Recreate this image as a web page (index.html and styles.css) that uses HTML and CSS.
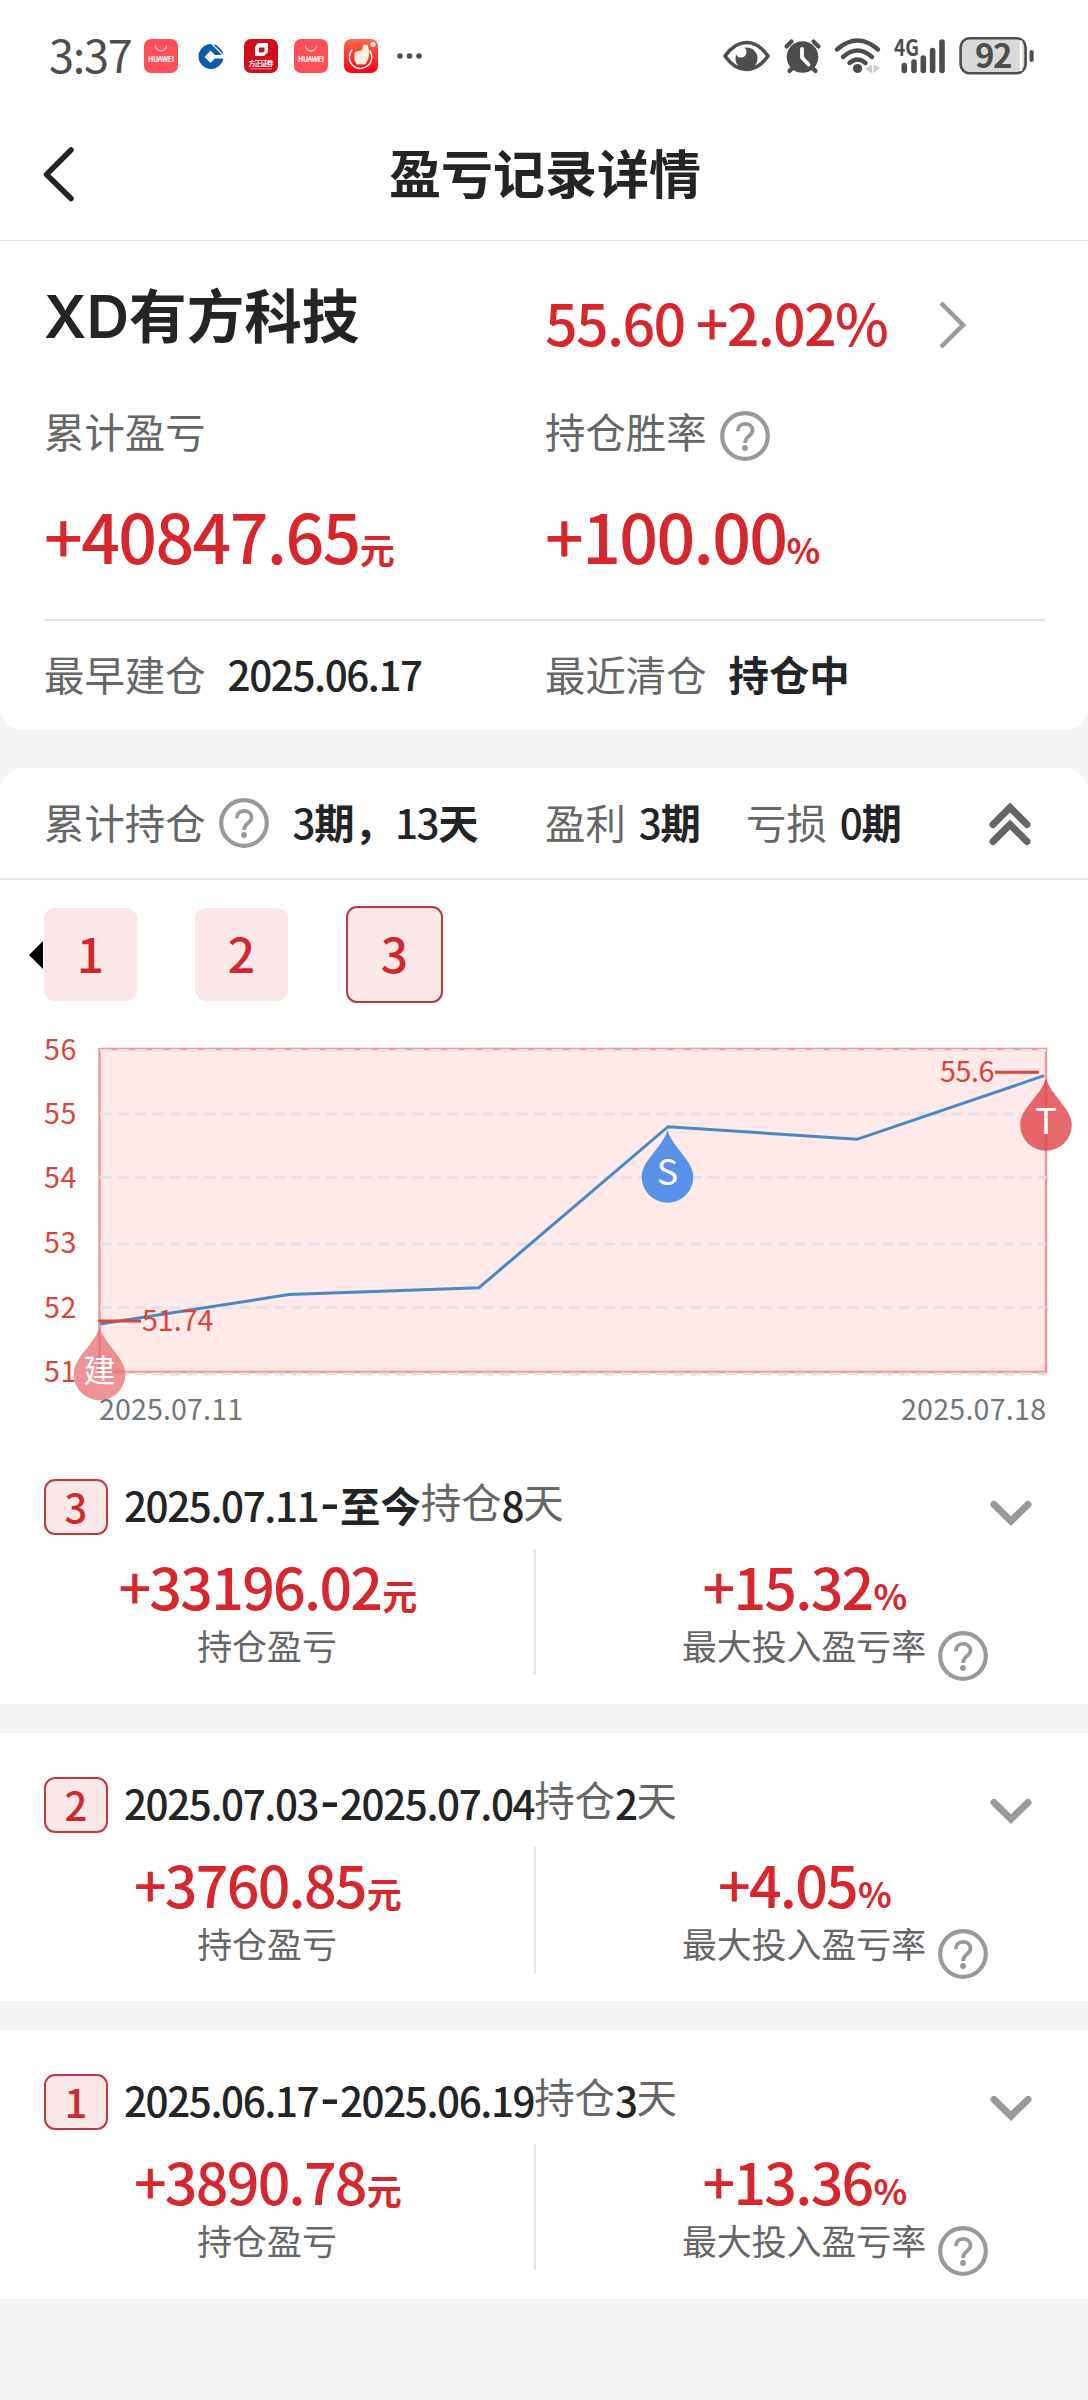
FILE: index.html
```html
<!DOCTYPE html>
<html lang="zh-CN">

<head>
	<meta charset="UTF-8">
	<meta name="viewport" content="width=device-width, initial-scale=1.0">
	<title>盈亏记录详情</title>
	<link rel="stylesheet" href="styles.css">
</head>

<body>
	<!-- 公用图标 -->
	<svg class="defs">
		<symbol id="help" viewBox="0 0 50 50">
			<circle cx="25" cy="25" r="22.8" fill="none" stroke="#999" stroke-width="4.2" />
			<path d="M17.8 20.2c0-4.6 3-7.4 7.3-7.4s7.4 2.6 7.4 6.6c0 5.6-7.4 5.6-7.4 12.6" fill="none" stroke="#999" stroke-width="3.8" />
			<circle cx="25" cy="37" r="2.9" fill="#999" />
		</symbol>
		<symbol id="down" viewBox="0 0 42 26">
			<path d="M4 4.500l17 16.500 17-16.500" fill="none" stroke="#999" stroke-width="7" stroke-linecap="round" />
		</symbol>
	</svg>

	<!-- 状态栏 -->
	<div class="status">
		<span class="time">3:37</span>
		<div class="apps">
			<svg width="34" height="34" viewBox="0 0 34 34">
				<rect width="34" height="34" rx="7" fill="#ff4f58" />
				<path d="M11.500 6.500a5.500 5.500 0 0 0 11 0" fill="none" stroke="#fff" stroke-width="1" />
				<text x="4" y="22.500" fill="#fff" font-size="7" font-weight="600" textLength="26">HUAWEI</text>
			</svg>
			<svg width="34" height="34" viewBox="0 0 34 34">
				<circle cx="17" cy="17.500" r="12.500" fill="#0a5cab" />
				<path d="M16.500 11.500l4.500 4.500h10v3.500H21l-4.500 4.500-6-6z" fill="#fff" />
				<path d="M16 3l13 13M20 2.500l12 12" stroke="#fff" stroke-width="1.200" />
			</svg>
			<svg width="34" height="34" viewBox="0 0 34 34">
				<rect width="34" height="34" rx="7" fill="#d20d1c" />
				<path d="M14 4h10v9l-4 4h-9V8zM15 8.500v5h4l1.500-1.500V8.500z" fill="#fff" fill-rule="evenodd" />
				<text x="4.500" y="27" fill="#fff" font-size="7" font-weight="700" textLength="25">方正证券</text>
				<path d="M6 29.800h22" stroke="#ee8a90" stroke-width="1" />
			</svg>
			<svg width="34" height="34" viewBox="0 0 34 34">
				<rect width="34" height="34" rx="7" fill="#ff4f58" />
				<path d="M11.500 6.500a5.500 5.500 0 0 0 11 0" fill="none" stroke="#fff" stroke-width="1" />
				<text x="4" y="22.500" fill="#fff" font-size="7" font-weight="600" textLength="26">HUAWEI</text>
			</svg>
			<svg width="34" height="34" viewBox="0 0 34 34">
				<linearGradient id="fire" x2="0" y2="1">
					<stop stop-color="#ff6a4c" />
					<stop offset="1" stop-color="#fb0012" />
				</linearGradient>
				<rect width="34" height="34" rx="7" fill="url(#fire)" />
				<path d="M8.500 10.500a11.200 11.200 0 1 0 17 1" fill="none" stroke="#fff" stroke-width="1.400" />
				<path d="M11 13l7-2 1.500-5.500 4 .5 1.500 5c1 4-1 12-4 14.500h-8c-3-3-3-8-2-12.500z" fill="#fff0dc" />
				<circle cx="29" cy="5.500" r="2.500" fill="#fff" />
			</svg>
			<svg class="more" width="26" height="34" viewBox="0 0 26 34">
				<g fill="#4d4d4d">
					<circle cx="4" cy="17" r="2.800" />
					<circle cx="13.500" cy="17" r="2.800" />
					<circle cx="23" cy="17" r="2.800" />
				</g>
			</svg>
		</div>
		<svg class="signals" width="314" height="40" viewBox="722 36 314 40">
			<g fill="none" stroke="#4d4d4d" stroke-width="3.600" stroke-linecap="round" stroke-linejoin="round">
				<!-- 护眼 -->
				<path d="M725 56q9.500-13.500 21.500-13.500T768 56q-9.500 13.500-21.500 13.500T725 56z" />
				<!-- 闹钟 -->
				<path d="M786.500 46.500l5-5M818.500 46.500l-5-5M789.500 71l4-4M815.500 71l-4-4" stroke-width="4.200" />
				<!-- 无线网络 -->
				<path d="M837 49.500q20.500-18 41 0M843 57q14.500-13 29 0M849.500 63q8-7 16 0" stroke-width="4.400" />
				<path d="M904.300 65.500v5M914 62v8.500M923.300 58v12.500M932.600 50.500v20M942 42v28.500" stroke-width="5.600" />
			</g>
			<circle cx="746.500" cy="58.500" r="11" fill="#4d4d4d" />
			<circle cx="741" cy="52" r="5.500" fill="#fff" />
			<circle cx="802.500" cy="57" r="15.800" fill="#4d4d4d" />
			<path d="M802 49v8.500l6.500 7" fill="none" stroke="#fff" stroke-width="3.800" stroke-linecap="round" />
			<circle cx="857.500" cy="68.500" r="4.600" fill="#4d4d4d" />
			<path d="M872 64.500v9l-6.500-4.500zM873.500 64.500v9l6.500-6z" fill="#ccc" />
			<text class="net" x="894" y="56" textLength="25" lengthAdjust="spacingAndGlyphs">4G</text>
			<rect x="960.600" y="38.200" width="65" height="35" rx="9" fill="#d9d9d9" stroke="#4d4d4d" stroke-width="2.600" />
			<path d="M1021 40.500v30.500" stroke="#fff" stroke-width="2.500" />
			<rect x="1029.500" y="50" width="4.200" height="12" rx="2" fill="#4d4d4d" />
			<text class="bat" x="975" y="67.500">92</text>
		</svg>
	</div>

	<!-- 标题栏 -->
	<div class="nav">
		<svg class="back" width="34" height="58" viewBox="0 0 34 58">
			<path d="M28 5L3.500 29.500 28 53.500" fill="none" stroke="#222426" stroke-width="5.500" stroke-linecap="round" stroke-linejoin="round" />
		</svg>
		<h1>盈亏记录详情</h1>
	</div>

	<!-- 汇总 -->
	<div class="summary">
		<div class="row name">
			<h2><span>XD</span>有方科技</h2>
			<div class="price">55.60 +2.02%
				<svg width="30" height="50" viewBox="0 0 30 50">
					<path d="M3 3l22 22L3 47" fill="none" stroke="#999" stroke-width="4.500" />
				</svg>
			</div>
		</div>
		<div class="row label">
			<div>累计盈亏</div>
			<div>持仓胜率<svg class="help"><use href="#help" /></svg></div>
		</div>
		<div class="row total">
			<div>+40847.65<small>元</small></div>
			<div>+100.00<small>%</small></div>
		</div>
		<div class="row dates">
			<div>最早建仓<b class="num">2025.06.17</b></div>
			<div>最近清仓<b>持仓中</b></div>
		</div>
	</div>

	<!-- 持仓周期 -->
	<div class="period">
		<div class="head">
			<div class="hold">累计持仓<svg class="help"><use href="#help" /></svg><b><s>3</s>期，<s>13</s>天</b></div>
			<div class="win">盈利<b><s>3</s>期</b></div>
			<div class="lose">亏损<b><s>0</s>期</b></div>
			<svg class="fold" width="44" height="44" viewBox="0 0 44 44">
				<path d="M5 22.500L22 5.500l17 17M5 39.500l17-17 17 17" fill="none" stroke="#666" stroke-width="7" stroke-linecap="round" />
			</svg>
		</div>
		<div class="tabs">
			<span class="arrow"></span>
			<a href="#">1</a>
			<a href="#">2</a>
			<a href="#" class="active">3</a>
		</div>

		<svg class="chart" width="1088" height="432" viewBox="0 0 1088 432">
			<rect x="99.500" y="46" width="946.500" height="323" fill="#ffe9e9" stroke="#f09a98" stroke-width="2.600" />
			<g class="grid">
				<path d="M100 47.500h946M100 111h946M100 174.500h946M100 241h946M100 304.500h946M100 371h946" />
			</g>
			<polyline points="100,321 289,291.500 479,284.700 668,123.700 857,136.300 1044,72.700" fill="none" stroke="#4688c8" stroke-width="3" />
			<g class="axis">
				<text x="44" y="56.500">56</text>
				<text x="44" y="121">55</text>
				<text x="44" y="185">54</text>
				<text x="44" y="250">53</text>
				<text x="44" y="315">52</text>
				<text x="44" y="379">51</text>
				<text x="142" y="328" textLength="72">51.74</text>
				<text x="940" y="79" textLength="55">55.6</text>
			</g>
			<path d="M98.500 318H141M995 69.300h44" stroke="#dc4437" stroke-width="3" />
			<g class="pin">
				<path d="M99.500 324c5 18 25.800 30 25.800 47.500a25.800 25.800 0 0 1-51.600 0c0-17.500 20.800-29.500 25.800-47.500z" fill="#e66a6e" fill-opacity=".72" />
				<text x="99.500" y="379" font-size="32">建</text>
				<path d="M667.500 127c5 18 25.800 30 25.800 47a25.800 25.800 0 0 1-51.600 0c0-17 20.800-29 25.800-47z" fill="#5a91e8" />
				<text x="667.500" y="182" font-size="36">S</text>
				<path d="M1046 75c5 18 25.800 30 25.800 47a25.800 25.800 0 0 1-51.600 0c0-17 20.800-29 25.800-47z" fill="#e04448" fill-opacity=".8" />
				<text x="1046" y="131" font-size="36">T</text>
			</g>
			<g class="date">
				<text x="99" y="417" textLength="144">2025.07.11</text>
				<text x="901" y="417" textLength="145">2025.07.18</text>
			</g>
		</svg>
	</div>

	<!-- 每期记录 -->
	<ul class="records">
		<li>
			<div class="top">
				<i>3</i>
				<b class="num">2025.07.11<u>-</u><em>至今</em></b><span>持仓</span><b class="num">8</b><span>天</span>
				<svg class="down"><use href="#down" /></svg>
			</div>
			<div class="data">
				<div class="col">
					<p>+33196.02<small>元</small></p>
					<span>持仓盈亏</span>
				</div>
				<div class="col rate">
					<p>+15.32<small>%</small></p>
					<span>最大投入盈亏率<svg class="help"><use href="#help" /></svg></span>
				</div>
			</div>
		</li>
		<li>
			<div class="top">
				<i>2</i>
				<b class="num">2025.07.03<u>-</u>2025.07.04</b><span>持仓</span><b class="num">2</b><span>天</span>
				<svg class="down"><use href="#down" /></svg>
			</div>
			<div class="data">
				<div class="col">
					<p>+3760.85<small>元</small></p>
					<span>持仓盈亏</span>
				</div>
				<div class="col rate">
					<p>+4.05<small>%</small></p>
					<span>最大投入盈亏率<svg class="help"><use href="#help" /></svg></span>
				</div>
			</div>
		</li>
		<li>
			<div class="top">
				<i>1</i>
				<b class="num">2025.06.17<u>-</u>2025.06.19</b><span>持仓</span><b class="num">3</b><span>天</span>
				<svg class="down"><use href="#down" /></svg>
			</div>
			<div class="data">
				<div class="col">
					<p>+3890.78<small>元</small></p>
					<span>持仓盈亏</span>
				</div>
				<div class="col rate">
					<p>+13.36<small>%</small></p>
					<span>最大投入盈亏率<svg class="help"><use href="#help" /></svg></span>
				</div>
			</div>
		</li>
	</ul>
</body>

</html>
```
FILE: styles.css
```css
* {
	margin: 0;
	padding: 0;
	box-sizing: border-box;
}

body {
	width: 1088px;
	min-height: 2400px;
	background: #f3f4f6;
	font-family: "Noto Sans CJK SC", sans-serif;
	color: #222426;
}

ul {
	list-style: none;
}

i,
em {
	font-style: normal;
}

s,
u {
	text-decoration: none;
}

svg {
	display: block;
	flex: none;
	overflow: visible;
}

.defs {
	position: absolute;
	width: 0;
	height: 0;
}

.help {
	width: 50px;
	height: 50px;
	margin-left: 13px;
}

.num {
	letter-spacing: -0.035em;
}

/* 状态栏 */
.status {
	display: flex;
	align-items: center;
	height: 112px;
	padding: 0 52px 0 49px;
	background: #fff;
}

.time {
	width: 95px;
	padding-bottom: 4px;
	font-size: 45px;
	line-height: 60px;
	letter-spacing: -1.2px;
	color: #4d4d4d;
}

.apps {
	display: flex;
	gap: 16px;
}

.apps .more {
	margin-left: 2px;
}

.signals {
	margin-left: auto;
}

.net {
	font-size: 23px;
	font-weight: 700;
	fill: #4d4d4d;
}

.bat {
	font-size: 33px;
	font-weight: 700;
	letter-spacing: -1.5px;
	fill: #4d4d4d;
}

/* 标题栏 */
.nav {
	display: flex;
	align-items: center;
	height: 129px;
	padding: 0 43px 5px;
	background: #fff;
	border-bottom: 1px solid #e5e5e5;
}

.nav h1 {
	flex: 1;
	margin-right: 32px;
	padding-bottom: 4px;
	font-size: 52px;
	font-weight: 600;
	line-height: 80px;
	text-align: center;
}

/* 汇总 */
.summary {
	height: 489px;
	padding: 35px 43px 0 44px;
	background: #fff;
	border-radius: 0 0 23px 23px;
}

.row {
	display: grid;
	grid-template-columns: 501px 1fr;
	align-items: center;
}

.row > div {
	display: flex;
	align-items: center;
}

.name {
	height: 90px;
}

.name h2 {
	padding-bottom: 14px;
	font-size: 57.6px;
	font-weight: 700;
	line-height: 74px;
}

.name h2 span {
	font-family: Inter, sans-serif;
	font-size: 59px;
	font-weight: 600;
}

.name .price {
	font-size: 57.3px;
	font-weight: 500;
	line-height: 80px;
	letter-spacing: -0.029em;
	color: #d8272c;
}

.price svg {
	margin: 6px 0 0 51px;
}

.label {
	height: 130px;
	padding-bottom: 2px;
	font-size: 40.4px;
	color: #666;
}

.label .help {
	margin-top: 12px;
}

.total {
	height: 123px;
	padding-bottom: 33px;
}

.row.total > div {
	align-items: baseline;
	font-size: 68px;
	font-weight: 500;
	line-height: 78px;
	letter-spacing: -0.024em;
	color: #d8272c;
}

.total small {
	font-size: 35px;
	font-weight: 700;
}

.dates {
	height: 110px;
	padding-bottom: 4px;
	border-top: 2px solid #e4e4e4;
	font-size: 40.4px;
	color: #666;
}

.dates b {
	margin-left: 22px;
	font-weight: 700;
	color: #222426;
}

.dates .num {
	font-weight: 500;
}

/* 持仓周期 */
.period {
	margin-top: 38px;
	background: #fff;
	border-radius: 23px 23px 0 0;
}

.head {
	display: flex;
	align-items: center;
	height: 112px;
	padding: 0 56px 4px 44px;
	border-bottom: 2px solid #e4e4e4;
	font-size: 40.4px;
	color: #666;
}

.head div {
	display: flex;
	align-items: center;
}

.head b {
	margin-left: 13px;
	font-weight: 700;
	color: #222426;
}

.head s {
	font-weight: 500;
	letter-spacing: -0.035em;
}

.head .hold {
	width: 501px;
}

.head .hold .help {
	margin-top: 4px;
}

.head .hold b {
	margin-left: 24px;
}

.head .win {
	width: 201px;
}

.head .fold {
	margin: 6px 0 0 auto;
}

.tabs {
	display: flex;
	align-items: center;
	height: 123px;
	padding: 26px 0 0 29px;
}

.tabs .arrow {
	border: 14px solid transparent;
	border-right-color: #000;
	border-left-width: 0;
}

.tabs a {
	width: 93px;
	height: 93px;
	margin: 0 57px 0 1px;
	background: #fae8e8;
	border-radius: 11px;
	font-size: 48px;
	font-weight: 500;
	line-height: 89px;
	text-align: center;
	text-decoration: none;
	color: #d0282e;
}

.tabs .active {
	width: 97px;
	height: 97px;
	border: 2px solid #b8393e;
}

.grid path {
	fill: none;
	stroke: #e2e2ee;
	stroke-width: 3;
	stroke-dasharray: 11.3 6.07;
}

.axis text {
	font-size: 28.6px;
	letter-spacing: .6px;
	fill: #dc4437;
}

.pin text {
	text-anchor: middle;
	fill: #fff;
}

.date text {
	font-size: 28.6px;
	fill: #70757c;
}

/* 每期记录 */
.records li {
	height: 268.6px;
	margin-bottom: 29px;
	padding-top: 34px;
	background: #fff;
}

.top {
	display: flex;
	align-items: center;
	height: 76px;
	padding: 0 56px 0 44px;
	font-size: 40.4px;
}

.top i {
	width: 64px;
	height: 56px;
	margin-right: 16px;
	background: #fae8e8;
	border: 2px solid #c0393e;
	border-radius: 11px;
	font-size: 40px;
	font-weight: 500;
	line-height: 51px;
	text-align: center;
	color: #d0282e;
}

.top b {
	padding-bottom: 5px;
	font-weight: 500;
}

.top u {
	margin: 0 2px;
	font-size: 54px;
	line-height: 0;
}

.top em {
	font-weight: 700;
	letter-spacing: 0;
}

.top span {
	padding-bottom: 13px;
	color: #666;
}

.top .down {
	width: 42px;
	height: 26px;
	margin: 12px 0 0 auto;
}

.data {
	display: flex;
	margin-top: 4px;
}

.col {
	display: flex;
	flex-direction: column;
	align-items: center;
	width: 536px;
	height: 126px;
	border-right: 2px solid #e4e4e4;
}

.col.rate {
	border: 0;
}

.col p {
	height: 70px;
	font-size: 57.3px;
	font-weight: 500;
	line-height: 74px;
	letter-spacing: -0.03em;
	color: #d8272c;
}

.col small {
	margin-left: 1px;
	font-size: 35px;
	font-weight: 700;
}

.col span {
	display: flex;
	height: 54px;
	font-size: 34.9px;
	line-height: 52px;
	color: #666;
}

.col .help {
	margin: 12px -62px 0 12px;
}
```
